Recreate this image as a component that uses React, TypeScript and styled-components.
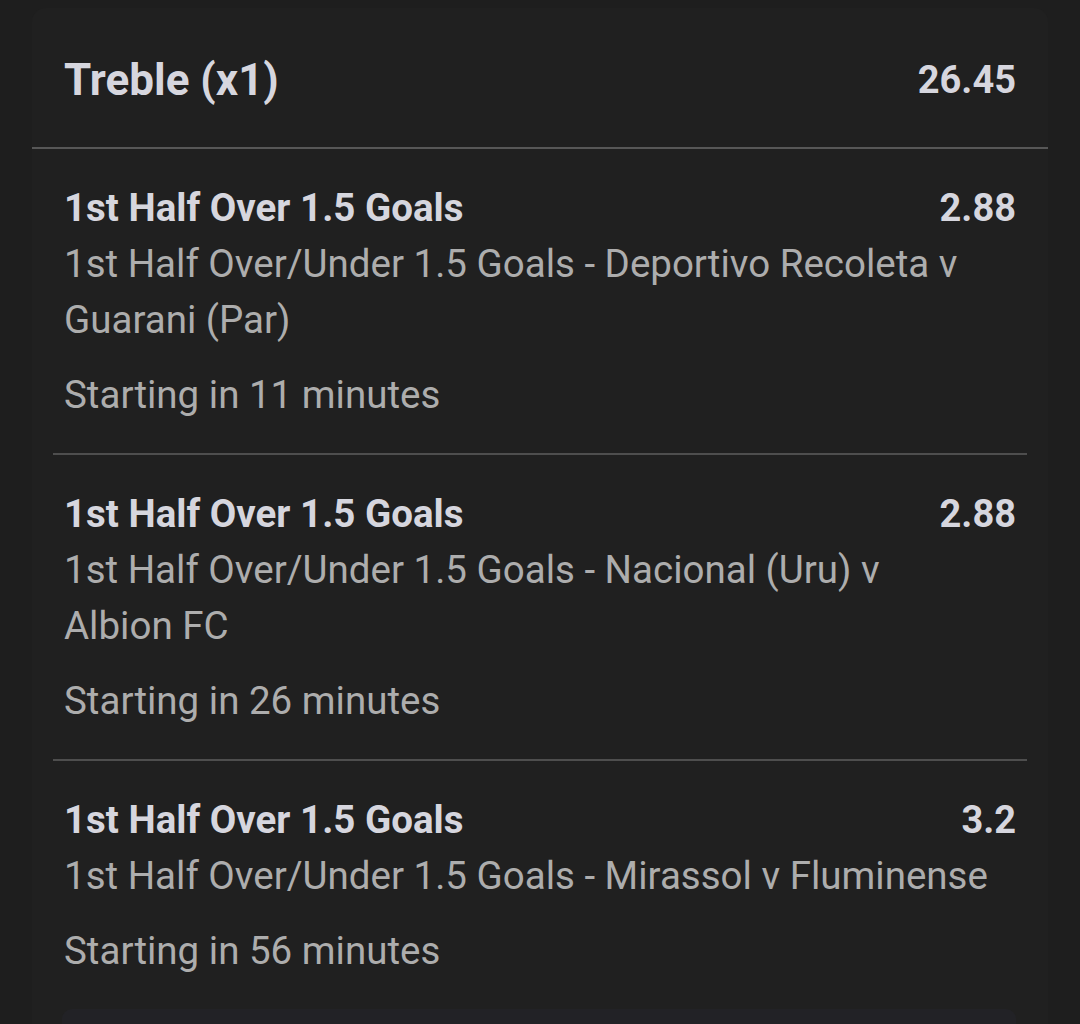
import React from 'react';
import styled, { createGlobalStyle } from 'styled-components';

const GlobalStyle = createGlobalStyle`
  html, body {
    margin: 0;
    padding: 0;
    background: #1e1e1e;
    font-family: Roboto, 'Liberation Sans', sans-serif;
  }
`;

const Page = styled.div`
  width: 1080px;
  height: 1024px;
  overflow: hidden;
  padding-top: 8px;
  box-sizing: border-box;
`;

const Panel = styled.section`
  margin: 0 32px;
  background: #202020;
  border-radius: 14px;
  padding-bottom: 40px;
`;

const Header = styled.header`
  display: flex;
  justify-content: space-between;
  align-items: center;
  height: 141px;
  padding: 4px 32px 0;
  box-sizing: border-box;
  border-bottom: 2px solid #575757;
`;

const Title = styled.h1`
  margin: 0;
  font-size: 44px;
  font-weight: 700;
  color: #d6d6de;
`;

const Total = styled.span`
  font-size: 38px;
  font-weight: 700;
  color: #d6d6de;
`;

const Leg = styled.div<{ $last?: boolean }>`
  margin: 0 21px;
  padding: 31px 11px 30px;
  border-bottom: ${(p) => (p.$last ? 'none' : '2px solid #4e4e4e')};
`;

const LegTop = styled.div`
  display: flex;
  justify-content: space-between;
  line-height: 56px;
`;

const Selection = styled.span`
  font-size: 38.5px;
  font-weight: 700;
  color: #d6d6de;
`;

const Odds = styled.span`
  font-size: 38px;
  font-weight: 700;
  color: #d6d6de;
`;

const Market = styled.div`
  font-size: 38.5px;
  line-height: 56px;
  color: #adadad;
  padding-right: 24px;
`;

const Start = styled.div`
  margin-top: 19px;
  font-size: 38.5px;
  line-height: 56px;
  color: #adadad;
`;

const NextCard = styled.div`
  margin: 0 32px 0 30px;
  height: 60px;
  background: #222226;
  border-radius: 10px;
`;

const legs = [
  {
    sel: '1st Half Over 1.5 Goals',
    odds: '2.88',
    market: '1st Half Over/Under 1.5 Goals - Deportivo Recoleta v Guarani (Par)',
    start: 'Starting in 11 minutes',
  },
  {
    sel: '1st Half Over 1.5 Goals',
    odds: '2.88',
    market: '1st Half Over/Under 1.5 Goals - Nacional (Uru) v Albion FC',
    start: 'Starting in 26 minutes',
  },
  {
    sel: '1st Half Over 1.5 Goals',
    odds: '3.2',
    market: '1st Half Over/Under 1.5 Goals - Mirassol v Fluminense',
    start: 'Starting in 56 minutes',
  },
];

export default function App() {
  return (
    <Page>
      <GlobalStyle />
      <Panel>
        <Header>
          <Title>Treble (x1)</Title>
          <Total>26.45</Total>
        </Header>
        {legs.map((l, i) => (
          <Leg key={i} $last={i === legs.length - 1}>
            <LegTop>
              <Selection>{l.sel}</Selection>
              <Odds>{l.odds}</Odds>
            </LegTop>
            <Market>{l.market}</Market>
            <Start>{l.start}</Start>
          </Leg>
        ))}
        <NextCard />
      </Panel>
    </Page>
  );
}
